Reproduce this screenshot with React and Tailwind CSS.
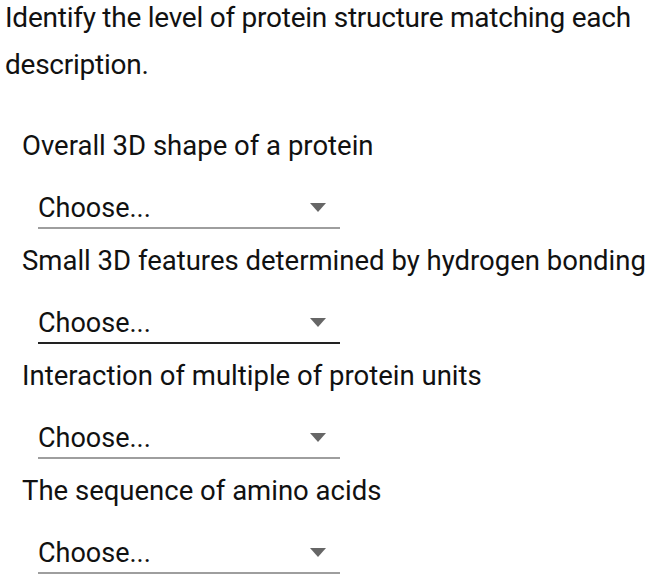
import React from "react";

const items = [
  { label: "Overall 3D shape of a protein", active: false },
  { label: "Small 3D features determined by hydrogen bonding", active: true },
  { label: "Interaction of multiple of protein units", active: false },
  { label: "The sequence of amino acids", active: false },
];

function Select({ active }) {
  return (
    <div
      className={`ml-[38px] w-[302px] h-[37px] flex items-start justify-between border-b-2 ${
        active ? "border-[#222]" : "border-[#9e9e9e]"
      }`}
    >
      <span className="text-[27px] leading-[32px] text-[#111]">Choose...</span>
      <svg width="16" height="9" viewBox="0 0 16 9" className="mr-[14px] mt-[11px]">
        <path d="M0 0 L16 0 L8 9 Z" fill="#666" />
      </svg>
    </div>
  );
}

export default function App() {
  return (
    <div
      className="w-[647px] h-[578px] bg-white overflow-hidden text-[#111]"
      style={{ fontFamily: "Roboto, 'Liberation Sans', sans-serif" }}
    >
      <div className="pl-[5px] -mt-[6px] text-[28px] leading-[47px] tracking-[-0.25px]">
        Identify the level of protein structure matching each description.
      </div>
      <div className="mt-[34px] flex flex-col">
        {items.map((it, i) => (
          <div key={i} className="flex flex-col h-[115px]">
            <div className="pl-[22px] text-[27.5px] leading-[48px] h-[48px] whitespace-nowrap">{it.label}</div>
            <div className="mt-[22px]">
              <Select active={it.active} />
            </div>
          </div>
        ))}
      </div>
    </div>
  );
}
